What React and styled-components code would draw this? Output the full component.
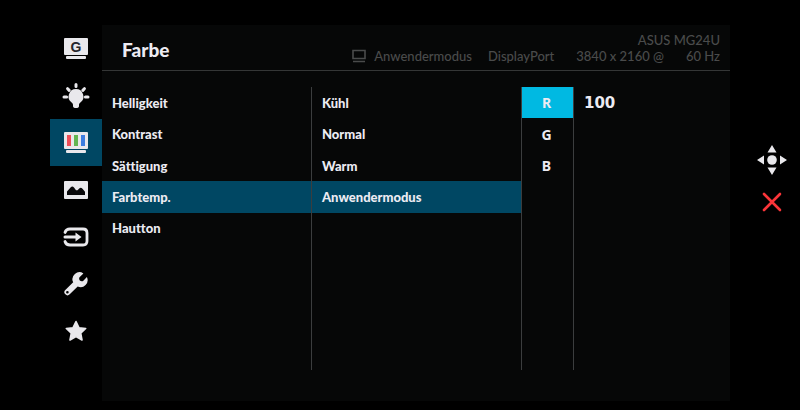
import React from "react";
import styled, { createGlobalStyle } from "styled-components";

const GlobalStyle = createGlobalStyle`
  * {
    box-sizing: border-box;
  }
  body {
    margin: 0;
    background: #000;
    color: #ecebf2;
    font-family: "Lato", "Noto Sans", sans-serif;
    font-variant-ligatures: none;
  }
  button {
    border: 0;
    padding: 0;
    background: none;
    color: inherit;
    font: inherit;
    font-variant-ligatures: inherit;
    cursor: pointer;
  }
`;

const Screen = styled.div`
  display: flex;
  min-height: 100vh;
  padding: 25px 0 9px 50px;
`;

const Sidebar = styled.nav`
  display: flex;
  flex-direction: column;
  width: 52px;
`;

const SideButton = styled.button`
  display: flex;
  align-items: center;
  justify-content: center;
  height: 47px;
  background: ${(props) => (props.$active ? "#004763" : "transparent")};
`;

const Panel = styled.main`
  display: flex;
  flex-direction: column;
  flex: 1;
  background: #060707;
`;

const Header = styled.header`
  display: flex;
  justify-content: space-between;
  height: 46px;
  padding: 0 10px 0 20px;
  border-bottom: 1px solid #343636;
`;

const Title = styled.h1`
  margin: 0;
  padding-top: 13px;
  font-size: 19px;
  line-height: 24px;
  font-weight: 900;
`;

const Status = styled.div`
  display: flex;
  flex-direction: column;
  align-items: flex-end;
  padding-top: 7px;
  color: #4a4b4b;
  font-size: 13px;
  line-height: 16px;
  font-weight: 500;
  white-space: nowrap;
`;

const StatusRow = styled.div`
  display: flex;
  gap: ${(props) => props.$gap || 0}px;
`;

const StatusMode = styled.span`
  display: flex;
  align-items: center;
  gap: 8px;
`;

const Columns = styled.div`
  display: grid;
  grid-template-columns: 209px 1fr 52px 157px;
  flex: 1;
  padding: 16px 0 31px;
`;

const Column = styled.div`
  display: grid;
  grid-template-rows: repeat(9, 1fr);
  border-left: ${(props) => (props.$line ? "1px solid #3b3d3e" : "0")};
`;

const Item = styled.button`
  padding-left: 10px;
  text-align: left;
  font-size: 13px;
  font-weight: 900;
  background: ${(props) => (props.$active ? "#004763" : "transparent")};
`;

const Channel = styled.button`
  padding-right: 2px;
  font-family: "Noto Sans", sans-serif;
  font-size: 14px;
  font-weight: 700;
  background: ${(props) => (props.$active ? "#00b9e2" : "transparent")};
`;

const Value = styled.output`
  display: flex;
  align-items: center;
  padding-left: 10px;
  font-family: "DejaVu Sans", sans-serif;
  font-size: 15px;
  font-weight: 700;
`;

const Controls = styled.div`
  display: flex;
  flex-direction: column;
  align-items: center;
  gap: 16px;
  width: 70px;
  padding: 119px 0 0 14px;
`;

const ControlButton = styled.button`
  display: flex;
`;

const IconLetter = styled.text`
  font-family: "Liberation Sans", sans-serif;
  font-size: 14px;
  font-weight: 700;
  fill: #25252b;
`;

const ink = "#e9e8ec";

const icons = {
  game: (
    <svg width="24" height="24" viewBox="0 0 24 24">
      <rect x="0" y="1" width="24" height="17" rx="1" fill={ink} />
      <IconLetter x="12" y="15" textAnchor="middle">G</IconLetter>
      <rect x="2" y="19" width="20" height="3" rx="1" fill={ink} />
    </svg>
  ),
  light: (
    <svg width="28" height="26" viewBox="0 0 28 26">
      <path d="M14 6a7.5 7.5 0 0 0-4.400 13.500c1 .8 1.400 1.500 1.400 2.600V23q0 2 3 2t3-2v-.9c0-1.100.4-1.800 1.400-2.600A7.5 7.5 0 0 0 14 6z" fill={ink} />
      <path d="M14 1.500v2M5.600 5.700l1.600 1.700M22.400 5.700l-1.600 1.700M2 14h2.600M26 14h-2.600" stroke={ink} strokeWidth="3" strokeLinecap="round" />
    </svg>
  ),
  color: (
    <svg width="24" height="24" viewBox="0 0 24 24">
      <rect x="0" y="1" width="24" height="17" rx="1" fill={ink} />
      <rect x="3" y="4" width="4" height="11" fill="#ef4e58" />
      <rect x="10" y="4" width="4" height="11" fill="#63b653" />
      <rect x="17" y="4" width="4" height="11" fill="#3d7ee0" />
      <rect x="2" y="19" width="20" height="3" rx="1" fill={ink} />
    </svg>
  ),
  image: (
    <svg width="24" height="20" viewBox="0 0 24 20">
      <rect x="0" y="1" width="24" height="18" rx="1" fill={ink} />
      <path d="M3 15v-3.5l4-4.5q1.5-1 3 .5l2 2.7h1.5l2-2q1.5-1 3 .5l2.5 3V15z" fill="#08080a" />
    </svg>
  ),
  input: (
    <svg width="26" height="20" viewBox="0 0 26 20">
      <path d="M2 5.5Q3 2 7 2h13q4 0 4 4v8q0 4-4 4H7q-4 0-5-3.5" fill="none" stroke={ink} strokeWidth="2.8" strokeLinecap="round" />
      <path d="M2 10h12" stroke={ink} strokeWidth="3" strokeLinecap="round" />
      <path d="M12.5 5.5 18.5 10l-6 4.5z" fill={ink} />
    </svg>
  ),
  system: (
    <svg width="24" height="24" viewBox="0 0 24 24">
      <path d="M19.4 1.4A7 7 0 0 0 9.2 10.3L1.3 18a3 3 0 0 0 4.4 4.3l8-7.8A7 7 0 0 0 22.9 5.1l-3.8 3.8q-1.8.8-3.3-.5-1.2-1.6-.3-3.2zM3.4 18.9a1.3 1.3 0 1 1 0 2.6 1.3 1.3 0 1 1 0-2.6z" fill={ink} fillRule="evenodd" />
    </svg>
  ),
  favorite: (
    <svg width="22" height="22" viewBox="0 0 22 22">
      <path d="m11 1.5 2.9 6.2 6.8.8-5 4.7 1.3 6.8-6-3.4L5 20l1.3-6.8-5-4.7 6.8-.8z" fill={ink} stroke={ink} strokeWidth="1.6" strokeLinejoin="round" />
    </svg>
  ),
};

const sideItems = [
  { id: "game", label: "GamePlus" },
  { id: "light", label: "Blaulichtfilter" },
  { id: "color", label: "Farbe" },
  { id: "image", label: "Bild" },
  { id: "input", label: "Eingang" },
  { id: "system", label: "System" },
  { id: "favorite", label: "Favorit" },
];

const settings = ["Helligkeit", "Kontrast", "Sättigung", "Farbtemp.", "Hautton"];
const modes = ["Kühl", "Normal", "Warm", "Anwendermodus"];
const channels = ["R", "G", "B"];

const App = () => {
  return (
    <Screen>
      <GlobalStyle />
      <Sidebar>
        {sideItems.map((item) => (
          <SideButton key={item.id} aria-label={item.label} $active={item.id === "color"}>
            {icons[item.id]}
          </SideButton>
        ))}
      </Sidebar>
      <Panel>
        <Header>
          <Title>Farbe</Title>
          <Status>
            <StatusRow>ASUS MG24U</StatusRow>
            <StatusRow $gap={22}>
              <StatusRow $gap={16}>
                <StatusMode>
                  <svg width="14" height="14" viewBox="0 0 14 14">
                    <path d="M1 1.5h12v8H1zM1 12.5h12" fill="none" stroke="#4a4b4b" strokeWidth="1.6" />
                  </svg>
                  Anwendermodus
                </StatusMode>
                <span>DisplayPort</span>
              </StatusRow>
              <span>3840 x 2160 @</span>
              <span>60 Hz</span>
            </StatusRow>
          </Status>
        </Header>
        <Columns>
          <Column>
            {settings.map((name) => (
              <Item key={name} $active={name === "Farbtemp."}>{name}</Item>
            ))}
          </Column>
          <Column $line>
            {modes.map((name) => (
              <Item key={name} $active={name === "Anwendermodus"}>{name}</Item>
            ))}
          </Column>
          <Column $line>
            {channels.map((name) => (
              <Channel key={name} $active={name === "R"}>{name}</Channel>
            ))}
          </Column>
          <Column $line>
            <Value>100</Value>
          </Column>
        </Columns>
      </Panel>
      <Controls>
        <ControlButton aria-label="Navigation">
          <svg width="32" height="32" viewBox="0 0 32 32" fill={ink}>
            <circle cx="16" cy="16" r="4.8" />
            <path d="m16 1 4.5 7.5h-9zM16 31l4.5-7.5h-9zM1 16l7-4.5v9zM31 16l-7-4.5v9z" />
          </svg>
        </ControlButton>
        <ControlButton aria-label="Schließen">
          <svg width="20" height="20" viewBox="0 0 20 20">
            <path d="m2 2 16 16M18 2 2 18" stroke="#fa3539" strokeWidth="2.6" strokeLinecap="round" />
          </svg>
        </ControlButton>
      </Controls>
    </Screen>
  );
};

export default App;
